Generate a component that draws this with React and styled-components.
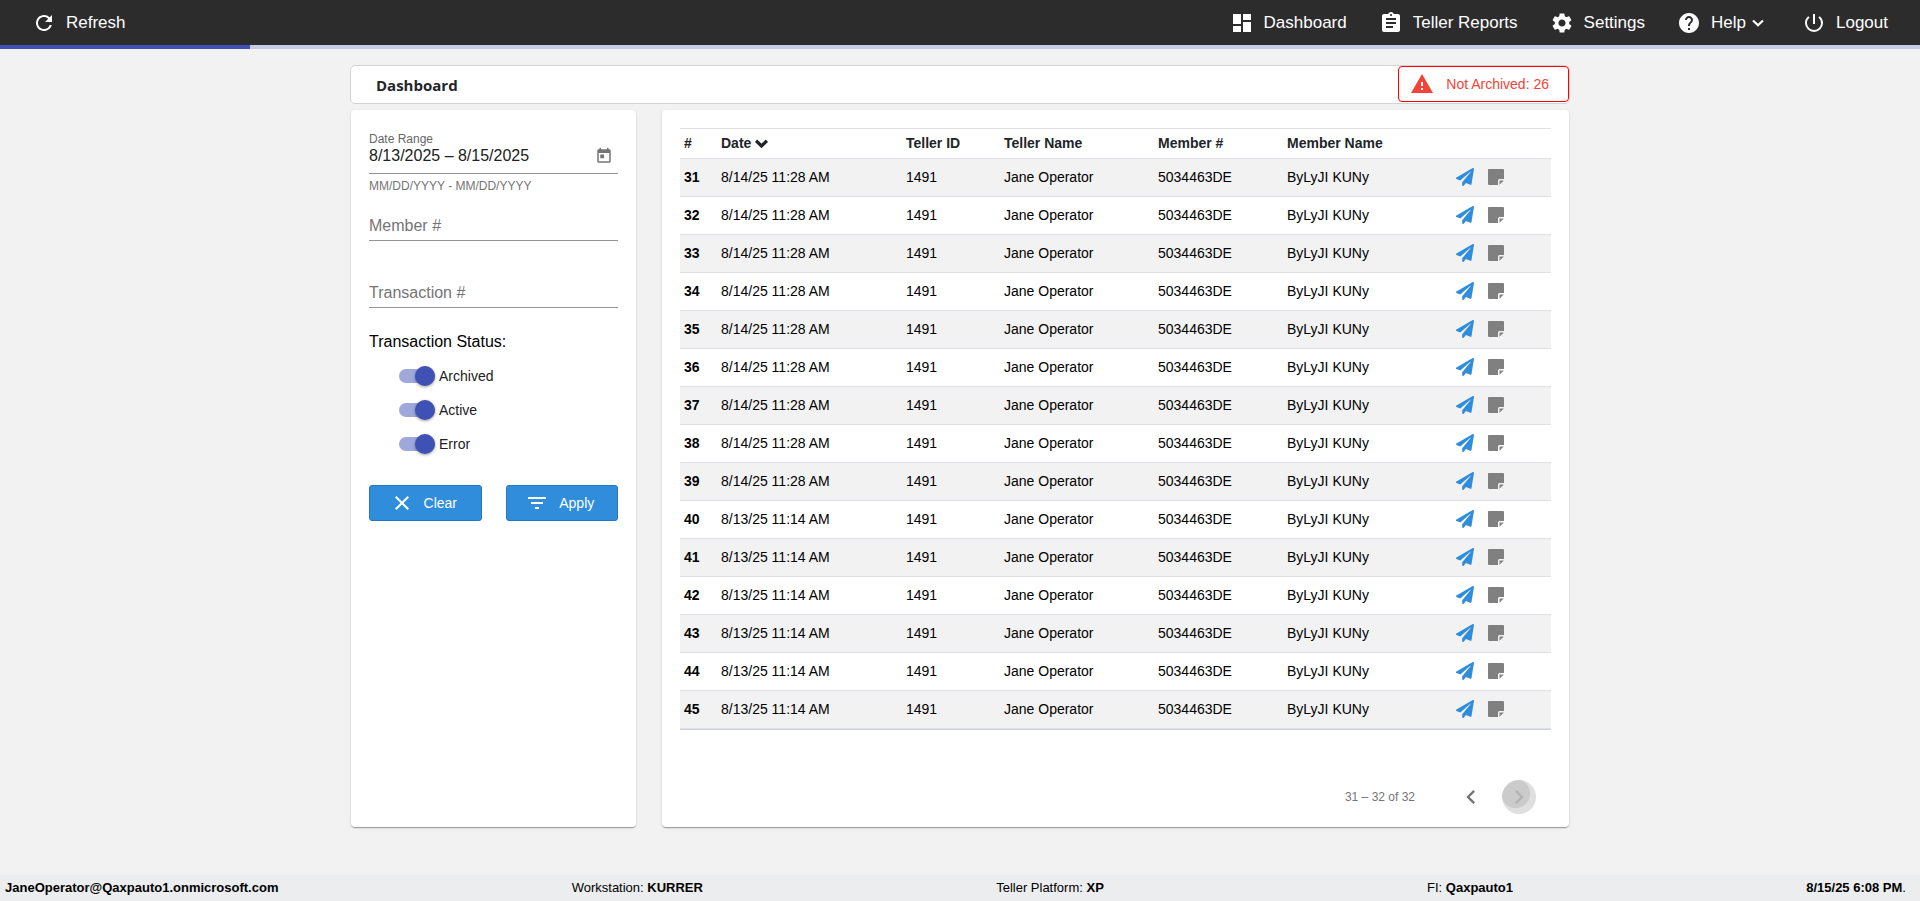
import React, { useState } from 'react';
import styled, { createGlobalStyle } from 'styled-components';
import {
  MdRefresh, MdDashboard, MdAssignment, MdSettings, MdHelp, MdPowerSettingsNew,
  MdWarning, MdClose, MdFilterList, MdToday, MdChevronLeft, MdChevronRight
} from 'react-icons/md';
import { FaPaperPlane } from 'react-icons/fa';


const navLinks = [
  { label: 'Dashboard', icon: MdDashboard },
  { label: 'Teller Reports', icon: MdAssignment },
  { label: 'Settings', icon: MdSettings },
  { label: 'Help', icon: MdHelp, menu: true },
  { label: 'Logout', icon: MdPowerSettingsNew },
]

const rows = Array.from({ length: 15 }, (_, i) => ({
  id: 31 + i,
  date: i < 9 ? '8/14/25 11:28 AM' : '8/13/25 11:14 AM',
  tellerId: '1491',
  tellerName: 'Jane Operator',
  member: '5034463DE',
  memberName: 'ByLyJI KUNy',
}))

function Chevron({ className, weight }) {
  return (
    <svg className={className} viewBox="0 0 12 8" fill="none" stroke="currentColor" strokeWidth={weight}>
      <path d="M1 1.5 6 6.3 11 1.5" />
    </svg>
  );
}

function NoteIcon() {
  return (
    <svg viewBox="0 0 18 18" fill="currentColor">
      <path d="M1.5 1H16Q17 1 17 2V11H12.5Q11 11 11 12.5V17H2Q1 17 1 16V1.5Z" />
      <path d="M12.5 12.5H16.8L12.5 16.8Z" />
    </svg>
  );
}

function Navbar() {
  return (
    <header>
      <NavBar>
        <NavButton type="button"><MdRefresh /> Refresh</NavButton>
        <NavGroup>
          {navLinks.map(({ label, icon: Icon, menu }) => (
            <NavLink key={label} href="#">
              <Icon /> <span>{label}</span>
              {menu && <MenuArrow weight={2.2} />}
            </NavLink>
          ))}
        </NavGroup>
      </NavBar>
      <Progress><ProgressFill /></Progress>
    </header>
  );
}

function Filters() {
  const [status, setStatus] = useState({ Archived: true, Active: true, Error: true });
  const [dates, setDates] = useState('8/13/2025 – 8/15/2025');

  const handleToggle = (name) => {
    setStatus({ ...status, [name]: !status[name] })
  }

  return (
    <FilterCard>
      <DateLabel htmlFor="dates">Date Range</DateLabel>
      <FieldRow>
        <DateInput id="dates" value={dates} onChange={(e) => setDates(e.target.value)} />
        <CalendarButton type="button" aria-label="Open calendar"><MdToday /></CalendarButton>
      </FieldRow>
      <Hint>MM/DD/YYYY - MM/DD/YYYY</Hint>
      <TextInput aria-label="Member #" placeholder="Member #" />
      <TextInput aria-label="Transaction #" placeholder="Transaction #" />
      <StatusGroup>
        <legend>Transaction Status:</legend>
        {Object.keys(status).map((name) => (
          <ToggleLabel key={name}>
            <Toggle type="checkbox" checked={status[name]} onChange={() => handleToggle(name)} />
            {name}
          </ToggleLabel>
        ))}
      </StatusGroup>
      <Actions>
        <ActionButton type="button"><MdClose /> Clear</ActionButton>
        <ActionButton type="button"><MdFilterList /> Apply</ActionButton>
      </Actions>
    </FilterCard>
  );
}

function Transactions() {
  return (
    <TableCard>
      <Table>
        <colgroup>
          <Col $w={37} />
          <Col $w={185} />
          <Col $w={98} />
          <Col $w={154} />
          <Col $w={129} />
          <Col $w={169} />
          <col />
        </colgroup>
        <thead>
          <tr>
            <th>#</th>
            <th>Date <SortArrow weight={3} /></th>
            <th>Teller ID</th>
            <th>Teller Name</th>
            <th>Member #</th>
            <th>Member Name</th>
            <th></th>
          </tr>
        </thead>
        <tbody>
          {rows.map((row) => (
            <tr key={row.id}>
              <th scope="row">{row.id}</th>
              <td>{row.date}</td>
              <td>{row.tellerId}</td>
              <td>{row.tellerName}</td>
              <td>{row.member}</td>
              <td>{row.memberName}</td>
              <td>
                <RowActions>
                  <RowButton type="button" aria-label="Send" $color="#2f8ddb"><FaPaperPlane /></RowButton>
                  <RowButton type="button" aria-label="Note" $color="#808080"><NoteIcon /></RowButton>
                </RowActions>
              </td>
            </tr>
          ))}
        </tbody>
      </Table>
      <Paginator>
        <span>31 – 32 of 32</span>
        <PageButton type="button" aria-label="Previous page"><MdChevronLeft /></PageButton>
        <PageButton type="button" aria-label="Next page" disabled><MdChevronRight /></PageButton>
      </Paginator>
    </TableCard>
  );
}

function App() {
  return (
    <Page>
      <GlobalStyle />
      <Navbar />
      <Content>
        <TitleBar>
          <h1>Dashboard</h1>
          <AlertButton type="button"><MdWarning /> Not Archived: 26</AlertButton>
        </TitleBar>
        <Columns>
          <Filters />
          <Transactions />
        </Columns>
      </Content>
      <Footer>
        <b>JaneOperator@Qaxpauto1.onmicrosoft.com</b>
        <span>Workstation: <b>KURRER</b></span>
        <span>Teller Platform: <b>XP</b></span>
        <Institution>FI: <b>Qaxpauto1</b></Institution>
        <span><b>8/15/25 6:08 PM</b>.</span>
      </Footer>
    </Page>
  );
}


export default App;

const GlobalStyle = createGlobalStyle`
*{
  box-sizing:border-box;
}
body{
  margin:0;
  background:#f2f2f2;
  color:#000;
  font-family:"Liberation Sans", Arial, sans-serif;
  font-size:14px;
}
button, input{
  font-family:inherit;
}
button{
  cursor:pointer;
}
`

const Page = styled.div`
display:flex;
flex-direction:column;
min-height:100vh;
`

const NavBar = styled.nav`
display:flex;
align-items:center;
justify-content:space-between;
height:45px;
padding:0 32px;
background:#2c2c2c;
`

const NavGroup = styled.div`
display:flex;
gap:32px;
`

const NavLink = styled.a`
display:flex;
align-items:center;
gap:10px;
color:white;
font-size:17px;
line-height:24px;
text-decoration:none;

svg{
  width:24px;
  height:24px;
}
`

const NavButton = styled(NavLink).attrs({ as: 'button' })`
border:0;
padding:0;
background:none;
`

const MenuArrow = styled(Chevron)`
&&{
  width:12px;
  height:8px;
  margin:0 6px 0 -4px;
}
`

const Progress = styled.div`
height:4px;
background:#c5cae9;
`

const ProgressFill = styled.div`
width:13%;
height:100%;
background:#3f51b5;
`

const Content = styled.main`
flex:1;
width:100%;
max-width:1220px;
margin:0 auto;
padding-top:16px;
`

const TitleBar = styled.div`
display:flex;
align-items:flex-start;
justify-content:space-between;
height:39px;
border:1px solid #d3d3d3;
border-radius:5px;
padding-left:25px;
background:white;

h1{
  margin:0;
  color:#212529;
  font-family:"Open Sans", sans-serif;
  font-size:15px;
  font-weight:700;
  line-height:38px;
}
`

const AlertButton = styled.button`
display:flex;
align-items:center;
gap:12px;
height:36px;
border:1px solid #f00;
border-radius:4px;
padding:0 19px 0 11px;
background:white;
color:#f44336;
font-size:14px;

svg{
  width:24px;
  height:24px;
}
`

const Columns = styled.div`
display:flex;
gap:26px;
margin-top:6px;
padding:0 1px;
`

const Card = styled.section`
border-radius:4px;
background:white;
box-shadow:0 2px 1px -1px rgba(0,0,0,0.2),
    0 1px 1px 0 rgba(0,0,0,0.14),
    0 1px 3px 0 rgba(0,0,0,0.12);
`

const FilterCard = styled(Card)`
width:285px;
padding:22px 18px;
`

const TableCard = styled(Card)`
flex:1;
min-width:0;
padding:18px 18px 10px;
`

const DateLabel = styled.label`
display:block;
color:#666;
font-size:12px;
line-height:14px;
`

const FieldRow = styled.div`
display:flex;
align-items:center;
height:28px;
padding-bottom:8px;
border-bottom:1px solid #949494;
`

const DateInput = styled.input`
flex:1;
min-width:0;
border:0;
padding:0;
color:#212121;
font-size:16px;
`

const CalendarButton = styled.button`
display:flex;
border:0;
padding:0;
margin-right:5px;
background:none;
color:#757575;

svg{
  width:18px;
  height:18px;
}
`

const Hint = styled.div`
margin:4px 0 17px;
color:#757575;
font-size:12px;
line-height:16px;
`

const TextInput = styled.input`
display:block;
width:100%;
height:30px;
border:0;
border-bottom:1px solid #949494;
padding:0;
background:none;
font-size:16px;

&::placeholder{
  color:#757575;
  opacity:1;
}

& + &{
  margin-top:37px;
}
`

const StatusGroup = styled.fieldset`
border:0;
padding:0;
margin:24px 0 0;

legend{
  padding:0;
  margin-bottom:7px;
  font-size:16px;
  line-height:20px;
}
`

const ToggleLabel = styled.label`
display:flex;
align-items:center;
gap:4px;
height:34px;
padding-left:30px;
color:#212121;
font-size:14px;
`

const Toggle = styled.input`
appearance:none;
display:flex;
align-items:center;
width:36px;
height:14px;
border-radius:7px;
margin:0;
background:${props => props.checked ? '#9fa8da' : '#9e9e9e'};

&::before{
  content:"";
  width:20px;
  height:20px;
  flex:none;
  border-radius:50%;
  margin-left:${props => props.checked ? '16px' : '0'};
  background:${props => props.checked ? '#3f51b5' : '#fafafa'};
  box-shadow:0 1px 3px rgba(0,0,0,0.4);
}
`

const Actions = styled.div`
display:flex;
gap:24px;
margin-top:24px;
`

const ActionButton = styled.button`
display:flex;
flex:1;
align-items:center;
justify-content:center;
gap:10px;
height:36px;
border:1px solid #2678bd;
border-radius:3px;
padding:0 4px 0 0;
background:#2f8ddb;
color:white;
font-size:14px;

svg{
  width:24px;
  height:24px;
}
`

const Table = styled.table`
width:100%;
border-collapse:collapse;
border-bottom:1px solid #dee2e6;
box-shadow:0 1px 0 #ced2d8;
table-layout:fixed;
font-size:14px;

th, td{
  height:38px;
  padding:0 4px 2px;
  border-top:1px solid #dee2e6;
  text-align:left;
  white-space:nowrap;
}

thead th{
  height:30px;
  color:#212529;
}

tbody tr:nth-child(odd){
  background:#f2f2f2;
}
`

const Col = styled.col`
width:${props => props.$w}px;
`

const SortArrow = styled(Chevron)`
width:13px;
height:9px;
`

const RowActions = styled.div`
display:flex;
gap:13px;
`

const RowButton = styled.button`
display:flex;
border:0;
padding:0;
background:none;
color:${props => props.$color};

svg{
  width:18px;
  height:18px;
}
`

const Paginator = styled.div`
display:flex;
align-items:center;
justify-content:flex-end;
margin-top:48px;
padding-right:15px;
color:#757575;
font-size:12px;

span{
  margin-right:36px;
}
`

const PageButton = styled.button`
display:flex;
align-items:center;
justify-content:center;
width:40px;
height:40px;
border:0;
border-radius:50%;
padding:0;
background:none;
color:#757575;

svg{
  width:28px;
  height:28px;
}

&:disabled{
  width:34px;
  height:34px;
  margin-left:11px;
  background:radial-gradient(circle at 40% 40%, #cbcbcb 14px, #dfdfdf 15px);
  color:#b3b3b3;
}
`

const Footer = styled.footer`
display:flex;
justify-content:space-between;
padding:5px 14px 5px 5px;
background:#ebedef;
font-size:13px;
line-height:16px;
`

const Institution = styled.span`
padding-left:30px;
`
